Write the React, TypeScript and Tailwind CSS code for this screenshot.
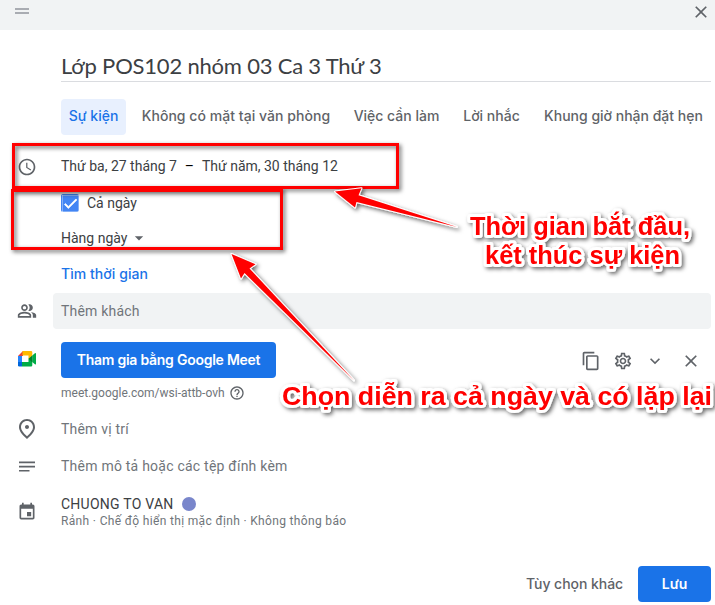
import type { ReactNode } from "react";
import {
  MdAccessTime,
  MdOutlinePeopleAlt,
  MdOutlinePlace,
  MdEvent,
  MdContentCopy,
  MdOutlineSettings,
  MdExpandMore,
  MdClose,
  MdHelpOutline,
  MdArrowDropDown,
  MdCheck,
} from "react-icons/md";

function Row({ icon, className, children }: { icon?: ReactNode; className: string; children: ReactNode }) {
  return (
    <div className={`flex items-center ${className}`}>
      <div className="flex w-[53px] shrink-0 justify-center pl-px text-[#5f6368]">{icon}</div>
      {children}
    </div>
  );
}

function MeetLogo() {
  return (
    <svg width="18" height="16" viewBox="0 0 18 16" className="mb-0.5">
      <path d="M0 5 5 0v5z" fill="#ea4335" />
      <path d="M0 5h4v6H0z" fill="#2684fc" />
      <path d="M0 11h4v4.500H1.200Q0 15.500 0 14.300z" fill="#0066da" />
      <path d="M4.500 0h8.500q1.300 0 1.300 1.300V5L10.500 8V4.500H4.500z" fill="#ffba00" />
      <path d="M4 11h6.500V8l3.800-3v9.200q0 1.300-1.300 1.300H4z" fill="#00ac47" />
      <path d="m14.300 4.500 2.600-2.200q1.100-.7 1.100.5v9.900q0 1.200-1.100.5l-2.600-2.200z" fill="#00ac47" />
      <path d="m10.500 7.800 3.800-3.300v7z" fill="#00832d" />
    </svg>
  );
}

function NotesIcon() {
  return (
    <svg width="16" height="11" viewBox="0 0 16 11" fill="currentColor">
      <path d="M0 .500h16v1.700H0zM0 4.700h16v1.700H0zM0 8.900h10.500v1.700H0z" />
    </svg>
  );
}

function Callouts() {
  return (
    <svg className="pointer-events-none absolute inset-0" width="715" height="605" viewBox="0 0 715 605">
      <defs>
        <filter id="shade" x="-20%" y="-20%" width="140%" height="140%">
          <feDropShadow dx="2" dy="2" stdDeviation="2" floodColor="#000" floodOpacity="0.6" />
        </filter>
      </defs>
      <g fill="none" stroke="#f00" strokeWidth="3" filter="url(#shade)">
        <path d="M13.500 144.500h384v43h-384z" />
        <path d="M12.500 190.500h269v58h-269z" />
      </g>
      <g fill="#f00" stroke="#fff" strokeWidth="2" strokeLinejoin="round" paintOrder="stroke" filter="url(#shade)">
        <path d="m335 191.500 26.500-3.300-3 7L457 227l-100.500-25-1.500 5.500z" />
        <path d="m231.500 254 24 10.300-6 4.200L354 380.500 244.500 273l-3.500 5.500z" />
      </g>
      <g
        fill="#f00"
        stroke="#fff"
        strokeWidth="6"
        strokeLinejoin="round"
        paintOrder="stroke"
        filter="url(#shade)"
        className="font-['Liberation_Sans',Arial,sans-serif] text-[25.5px] font-bold tracking-[0px]"
      >
        <text x="470" y="235" textLength="220" lengthAdjust="spacingAndGlyphs">Thời gian bắt đầu,</text>
        <text x="485" y="263.500" textLength="195" lengthAdjust="spacingAndGlyphs">kết thúc sự kiện</text>
        <text x="282" y="405" textLength="430" lengthAdjust="spacingAndGlyphs">Chọn diễn ra cả ngày và có lặp lại</text>
      </g>
    </svg>
  );
}

const product = "font-['Inter','Open_Sans',sans-serif]";

export default function App() {
  return (
    <div className="relative h-[605px] w-[715px] overflow-hidden bg-white font-['Roboto',sans-serif] text-sm tracking-[0.2px] text-[#3c4043]">
      <header className="flex h-[30px] items-start justify-between bg-[#f1f3f4] pt-0.5 pr-1 pl-[15px]">
        <div className="mt-1.5 flex h-1.5 w-3.5 flex-col justify-between">
          <span className="h-0.5 bg-[#a9acb2]" />
          <span className="h-0.5 bg-[#a9acb2]" />
        </div>
        <MdClose size={20} className="text-[#5f6368]" />
      </header>

      <div className="mr-1 ml-[61px] flex h-[52px] items-end border-b border-[#dadce0] font-['Lato','Open_Sans',sans-serif]">
        <h1 className="text-[22px] leading-[30px] tracking-[-0.2px] whitespace-nowrap">Lớp POS102 nhóm 03 Ca 3 Thứ 3</h1>
      </div>

      <nav className={`mt-[17px] ml-[61px] flex h-9 gap-2 pb-0.5 font-medium whitespace-nowrap text-[#5f6368] ${product}`}>
        <div className="-mb-0.5 flex w-[65px] items-center justify-center rounded bg-[#e8f0fe] pb-0.5 text-[#1a73e8] tracking-[0px]">
          Sự kiện
        </div>
        <div className="flex w-[204px] items-center justify-center tracking-[0.05px]">Không có mặt tại văn phòng</div>
        <div className="flex w-[101px] items-center justify-center tracking-[0px]">Việc cần làm</div>
        <div className="flex w-[73px] items-center justify-center tracking-[0px]">Lời nhắc</div>
        <div className="flex w-[175px] items-center justify-center tracking-[0px]">Khung giờ nhận đặt hẹn</div>
      </nav>

      <Row className="mt-3 h-10" icon={<MdAccessTime size={20} />}>
        <div className="flex pb-0.5 pl-2 tracking-[0px] whitespace-nowrap">
          <span>Thứ ba, 27 tháng 7</span>
          <span className="w-[25px] text-center text-black">–</span>
          <span>Thứ năm, 30 tháng 12</span>
        </div>
      </Row>
      <Row className="h-8">
        <div className="flex items-center gap-2 pl-2 tracking-[0px]">
          <span className="flex size-[18px] items-center justify-center rounded-xs bg-[#4285f4] text-white">
            <MdCheck size={17} strokeWidth={1} stroke="currentColor" />
          </span>
          <span>Cả ngày</span>
        </div>
      </Row>
      <Row className="h-[38px]">
        <div className="flex items-center pl-2 tracking-[0px]">
          <span>Hàng ngày</span>
          <MdArrowDropDown size={20} className="ml-0.5 text-[#5f6368]" />
        </div>
      </Row>
      <Row className="h-[35px]">
        <span className={`pb-px pl-2 font-medium tracking-[0.05px] text-[#1a73e8] ${product}`}>Tìm thời gian</span>
      </Row>
      <Row className="mt-px h-9" icon={<MdOutlinePeopleAlt size={20} />}>
        <div className="mr-1 flex h-9 grow items-center rounded bg-[#f1f3f4] pl-2 text-[#70757a]">Thêm khách</div>
      </Row>

      <Row className="mt-[13px] h-9" icon={<MeetLogo />}>
        <button
          className={`ml-2 h-9 w-[215px] rounded bg-[#1a73e8] pb-px font-semibold tracking-[-0.25px] whitespace-nowrap text-white ${product}`}
        >
          Tham gia bằng Google Meet
        </button>
        <div className="ml-auto flex items-center pt-0.5 pr-[14px] text-[#5f6368]">
          <MdContentCopy size={20} />
          <MdOutlineSettings size={20} className="ml-3" />
          <MdExpandMore size={20} className="ml-3" />
          <MdClose size={20} className="ml-4" />
        </div>
      </Row>
      <Row className="h-[30px]">
        <div className="flex items-center gap-1 pl-2 text-xs tracking-[0px] text-[#70757a]">
          meet.google.com/wsi-attb-ovh
          <MdHelpOutline size={16} className="text-[#5f6368]" />
        </div>
      </Row>

      <Row className="mt-0.5 h-[38px] text-[#70757a]" icon={<MdOutlinePlace size={24} />}>
        <span className="pl-2">Thêm vị trí</span>
      </Row>
      <Row className="h-9 text-[#70757a]" icon={<NotesIcon />}>
        <span className="pl-2 tracking-[0.23px]">Thêm mô tả hoặc các tệp đính kèm</span>
      </Row>
      <Row className="mt-2 h-10" icon={<MdEvent size={20} />}>
        <div className="pb-px pl-2">
          <div className="flex h-[19px] items-center gap-2 tracking-[0.25px]">
            CHUONG TO VAN
            <span className="size-3.5 rounded-full bg-[#7986cb]" />
          </div>
          <div className="h-4 text-xs tracking-[0.34px] text-[#70757a]">Rảnh · Chế độ hiển thị mặc định · Không thông báo</div>
        </div>
      </Row>

      <footer className={`mt-[34px] mr-1 flex h-9 items-center justify-end font-medium ${product}`}>
        <span className="mr-4 w-24 pb-px text-center tracking-[-0.05px] whitespace-nowrap text-[#5f6368]">Tùy chọn khác</span>
        <button className="h-9 w-[73px] rounded bg-[#1a73e8] pb-px font-semibold tracking-[0px] text-white">Lưu</button>
      </footer>

      <Callouts />
    </div>
  );
}
